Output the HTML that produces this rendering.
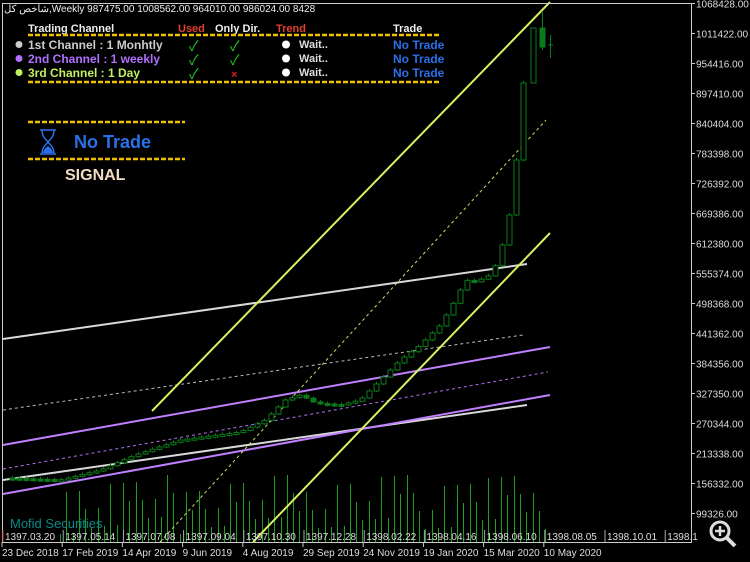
<!DOCTYPE html>
<html><head><meta charset="utf-8">
<style>
html,body{margin:0;padding:0;background:#000;width:750px;height:562px;overflow:hidden}
svg{display:block}
text{font-family:"Liberation Sans","Noto Sans CJK SC",sans-serif}
</style></head><body>
<svg id="s" width="750" height="562" xmlns="http://www.w3.org/2000/svg">
<rect width="750" height="562" fill="#000"/>
<g id="vol"></g>
<line x1="3" y1="339" x2="527" y2="264" stroke="#d8d8d8" stroke-width="2"/>
<line x1="3" y1="480" x2="527" y2="405" stroke="#d8d8d8" stroke-width="2"/>
<line x1="3" y1="410" x2="523" y2="335" stroke="#bbb" stroke-width="1" stroke-dasharray="3,3"/>
<line x1="3" y1="445" x2="550" y2="347" stroke="#c080ff" stroke-width="2"/>
<line x1="3" y1="494" x2="550" y2="395" stroke="#c080ff" stroke-width="2"/>
<line x1="3" y1="469" x2="548" y2="372" stroke="#b070f0" stroke-width="1" stroke-dasharray="3,3"/>
<line x1="152" y1="411" x2="550" y2="2" stroke="#d8f060" stroke-width="2"/>
<line x1="253" y1="542" x2="550" y2="233" stroke="#d8f060" stroke-width="2"/>
<line x1="160" y1="542" x2="546" y2="120" stroke="#c8e060" stroke-width="1" stroke-dasharray="3,3"/>
<g id="cdl"></g>
<rect x="2.5" y="3.5" width="689" height="539" fill="none" stroke="#ccc" stroke-width="1"/>
<g font-size="10" fill="#ddd" id="py"></g>
<g font-size="10" fill="#ddd" id="tx"></g>
<text x="4" y="12" font-size="10" fill="#eee">شاخص کل,Weekly  987475.00 1008562.00 964010.00 986024.00  8428</text>
<text x="10" y="528" font-size="13" fill="#0a8a8a" font-family="Liberation Serif,serif">Mofid Securities</text>
<g font-size="11" font-weight="bold">
<text x="28" y="32" fill="#eee">Trading Channel</text>
<text x="178" y="32" fill="#e04030">Used</text>
<text x="215" y="32" fill="#eee">Only Dir.</text>
<text x="276" y="32" fill="#e04030">Trend</text>
<text x="393" y="32" fill="#eee">Trade</text>
<line x1="28" y1="35" x2="440" y2="35" stroke="#f0c000" stroke-width="2.5" stroke-dasharray="5,2"/>
<line x1="28" y1="82" x2="440" y2="82" stroke="#f0c000" stroke-width="2.5" stroke-dasharray="5,2"/>
<circle cx="19" cy="44.5" r="3.5" fill="#ccc"/>
<circle cx="19" cy="58.5" r="3.5" fill="#b070ff"/>
<circle cx="19" cy="72.5" r="3.5" fill="#c0f060"/>
<text x="28" y="49" fill="#ccc" font-size="12">1st Channel   : 1 Monhtly</text>
<text x="28" y="63" fill="#b070ff" font-size="12">2nd Channel : 1 weekly</text>
<text x="28" y="77" fill="#c0f060" font-size="12">3rd Channel  : 1 Day</text>
<g fill="#20d020" font-size="14" font-weight="normal">
<text x="189" y="51">✓</text><text x="189" y="65">✓</text><text x="189" y="79">✓</text>
<text x="230" y="51">✓</text><text x="230" y="65">✓</text>
</g>
<text x="231" y="78" fill="#e02020" font-size="11">×</text>
<circle cx="286" cy="44.5" r="4" fill="#fff"/><circle cx="286" cy="58.5" r="4" fill="#fff"/><circle cx="286" cy="72.5" r="4" fill="#fff"/>
<text x="299" y="48" fill="#ddd" font-size="11">Wait..</text>
<text x="299" y="62" fill="#ddd" font-size="11">Wait..</text>
<text x="299" y="76" fill="#ddd" font-size="11">Wait..</text>
<g fill="#2a70e8" font-size="12"><text x="393" y="49">No Trade</text><text x="393" y="63">No Trade</text><text x="393" y="77">No Trade</text></g>
<line x1="28" y1="122" x2="185" y2="122" stroke="#f0c000" stroke-width="2.5" stroke-dasharray="5,2"/>
<line x1="28" y1="159" x2="185" y2="159" stroke="#f0c000" stroke-width="2.5" stroke-dasharray="5,2"/>
<text x="74" y="148" fill="#2a70e8" font-size="18">No Trade</text>
<text x="65" y="180" fill="#f0dcc0" font-size="16">SIGNAL</text>
</g>
<g stroke="#2a70e8" stroke-width="1.5" fill="none">
<line x1="40" y1="130" x2="56" y2="130"/><line x1="40" y1="154" x2="56" y2="154"/>
<path d="M42 130 C42 138 47 140 48 142 C47 144 42 146 42 154 M54 130 C54 138 49 140 48 142 C49 144 54 146 54 154"/>
</g>
<path d="M43 153 C44 148 47 147 48 146 C49 147 52 148 53 153Z" fill="#2a70e8"/>
<g stroke="#ddd" fill="none"><circle cx="720" cy="531" r="9" stroke-width="3"/><line x1="727" y1="538" x2="735" y2="546" stroke-width="4"/><line x1="720" y1="526" x2="720" y2="536" stroke-width="2.5"/><line x1="715" y1="531" x2="725" y2="531" stroke-width="2.5"/></g>
</svg>
<script>
var NS="http://www.w3.org/2000/svg";
function el(p,t,a,txt){var e=document.createElementNS(NS,t);for(var k in a)e.setAttribute(k,a[k]);if(txt)e.textContent=txt;document.getElementById(p).appendChild(e);return e;}
var prices=["1068428.00","1011422.00","954416.00","897410.00","840404.00","783398.00","726392.00","669386.00","612380.00","555374.00","498368.00","441362.00","384356.00","327350.00","270344.00","213338.00","156332.00","99326.00"];
prices.forEach(function(p,i){var y=3.5+i*30;el("py","line",{x1:691,y1:y,x2:695,y2:y,stroke:"#ccc"});el("py","text",{x:696,y:y+4},p);});
var pd=["1397.03.20","1397.05.14","1397.07.08","1397.09.04","1397.10.30","1397.12.28","1398.02.22","1398.04.16","1398.06.10","1398.08.05","1398.10.01","1398.1"];
pd.forEach(function(d,i){var x=3+i*60.2;el("tx","line",{x1:x,y1:530,x2:x,y2:542,stroke:i==0?"#c33":"#aab"});el("tx","text",{x:x+2,y:540},d);});
var gd=["23 Dec 2018","17 Feb 2019","14 Apr 2019","9 Jun 2019","4 Aug 2019","29 Sep 2019","24 Nov 2019","19 Jan 2020","15 Mar 2020","10 May 2020"];
gd.forEach(function(d,i){var x=2+i*60.2;el("tx","line",{x1:x,y1:542,x2:x,y2:547,stroke:"#ccc"});el("tx","text",{x:x,y:556},d);});
var kp=[[5,478],[60,480],[100,470],[135,455],[180,440],[240,432],[265,420],[285,400],[300,395],[315,403],[340,405],[360,400],[380,380],[400,360],[420,345],[440,325],[455,300],[465,280],[475,282],[490,275],[497,262],[502,245],[509,215],[516,160],[523,83]];
function f(x){for(var i=1;i<kp.length;i++){if(x<=kp[i][0]){var a=kp[i-1],b=kp[i];return a[1]+(b[1]-a[1])*(x-a[0])/(b[0]-a[0]);}}return 83;}
var G="#0a7a1a";
var prev=f(5);
for(var x=12;x<=523;x+=7){var c=f(x);var yy=Math.min(prev,c),h=Math.max(2,Math.abs(prev-c));
el("cdl","line",{x1:x+0.5,y1:yy-2,x2:x+0.5,y2:yy+h+1,stroke:G});
el("cdl","rect",{x:x-2,y:yy,width:5,height:h,fill:(c>prev?G:"#000"),stroke:G});prev=c;}
el("cdl","rect",{x:531,y:28,width:5,height:55,fill:"#000",stroke:G});
el("cdl","line",{x1:542.5,y1:12,x2:542.5,y2:50,stroke:G});
el("cdl","rect",{x:540,y:28,width:5,height:19,fill:G,stroke:G});
el("cdl","line",{x1:550.5,y1:35,x2:550.5,y2:58,stroke:G});
el("cdl","line",{x1:548,y1:45,x2:553,y2:45,stroke:G});
for(var x=60;x<=548;x+=6.3){var vh=8+((Math.round(x)*37)%60);el("vol","line",{x1:Math.round(x)+0.5,y1:542,x2:Math.round(x)+0.5,y2:542-vh,stroke:"#20a020"});}
</script>
</body></html>
